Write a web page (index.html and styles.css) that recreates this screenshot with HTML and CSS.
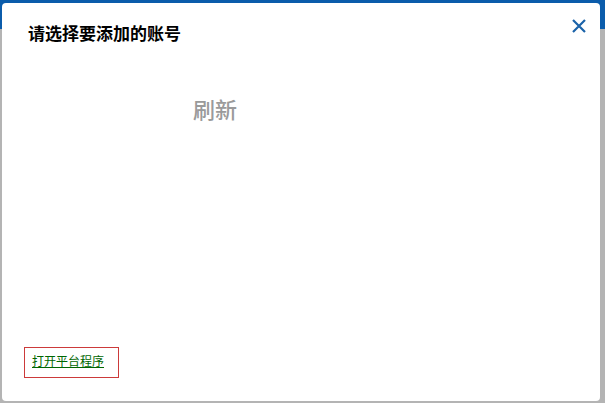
FILE: index.html
```html
<!DOCTYPE html>
<html lang="zh-CN">
<head>
    <meta charset="UTF-8">
    <title>选择账号</title>
    <link rel="stylesheet" href="styles.css">
</head>
<body>
    <div class="backdrop">
        <div class="backdrop-bar"></div>
    </div>
    <div class="dialog">
        <div class="dialog-header">
            <h2 class="dialog-title">请选择要添加的账号</h2>
            <a class="close-btn" href="#" title="关闭">
                <svg width="16" height="16" viewBox="0 0 16 16">
                    <path d="M2 2 L14 14 M14 2 L2 14" stroke="#1b63a9" stroke-width="2.2" fill="none"/>
                </svg>
            </a>
        </div>
        <div class="dialog-body">
            <div class="refresh">刷新</div>
        </div>
        <div class="dialog-footer">
            <a class="open-app" href="#">打开平台程序</a>
        </div>
    </div>
</body>
</html>
```

FILE: styles.css
```css
body {
    margin: 0;
    font-family: "Noto Sans CJK SC", "Liberation Sans", sans-serif;
    background: #b4b4b4;
    width: 605px;
    height: 403px;
    overflow: hidden;
    position: relative;
}

.backdrop {
    position: absolute;
    top: 0;
    left: 0;
    right: 0;
    bottom: 0;
}

.backdrop-bar {
    height: 29px;
    background: #0b5cab;
}

.dialog {
    position: absolute;
    top: 3px;
    left: 2px;
    width: 598px;
    height: 398px;
    background: #fff;
    border-radius: 4px;
    display: flex;
    flex-direction: column;
}

.dialog-header {
    display: flex;
    justify-content: space-between;
    align-items: flex-start;
    padding: 11px 13px 0 26px;
}

.dialog-title {
    margin: 7px 0 0;
    font-size: 17px;
    font-weight: bold;
    color: #000;
    line-height: 24px;
}

.close-btn {
    display: block;
    width: 16px;
    height: 16px;
    margin-top: 1px;
}

.dialog-body {
    flex: 1;
    padding-left: 191px;
    padding-top: 48px;
}

.refresh {
    font-size: 22px;
    font-weight: 500;
    color: #9a9a9a;
    line-height: 30px;
}

.dialog-footer {
    padding: 0 0 23px 22px;
}

.open-app {
    display: inline-block;
    border: 1px solid #cc3a3a;
    padding: 5px 14px 8px 7px;
    font-size: 12px;
    line-height: 16px;
    color: #006600;
    text-decoration: underline;
}
```
